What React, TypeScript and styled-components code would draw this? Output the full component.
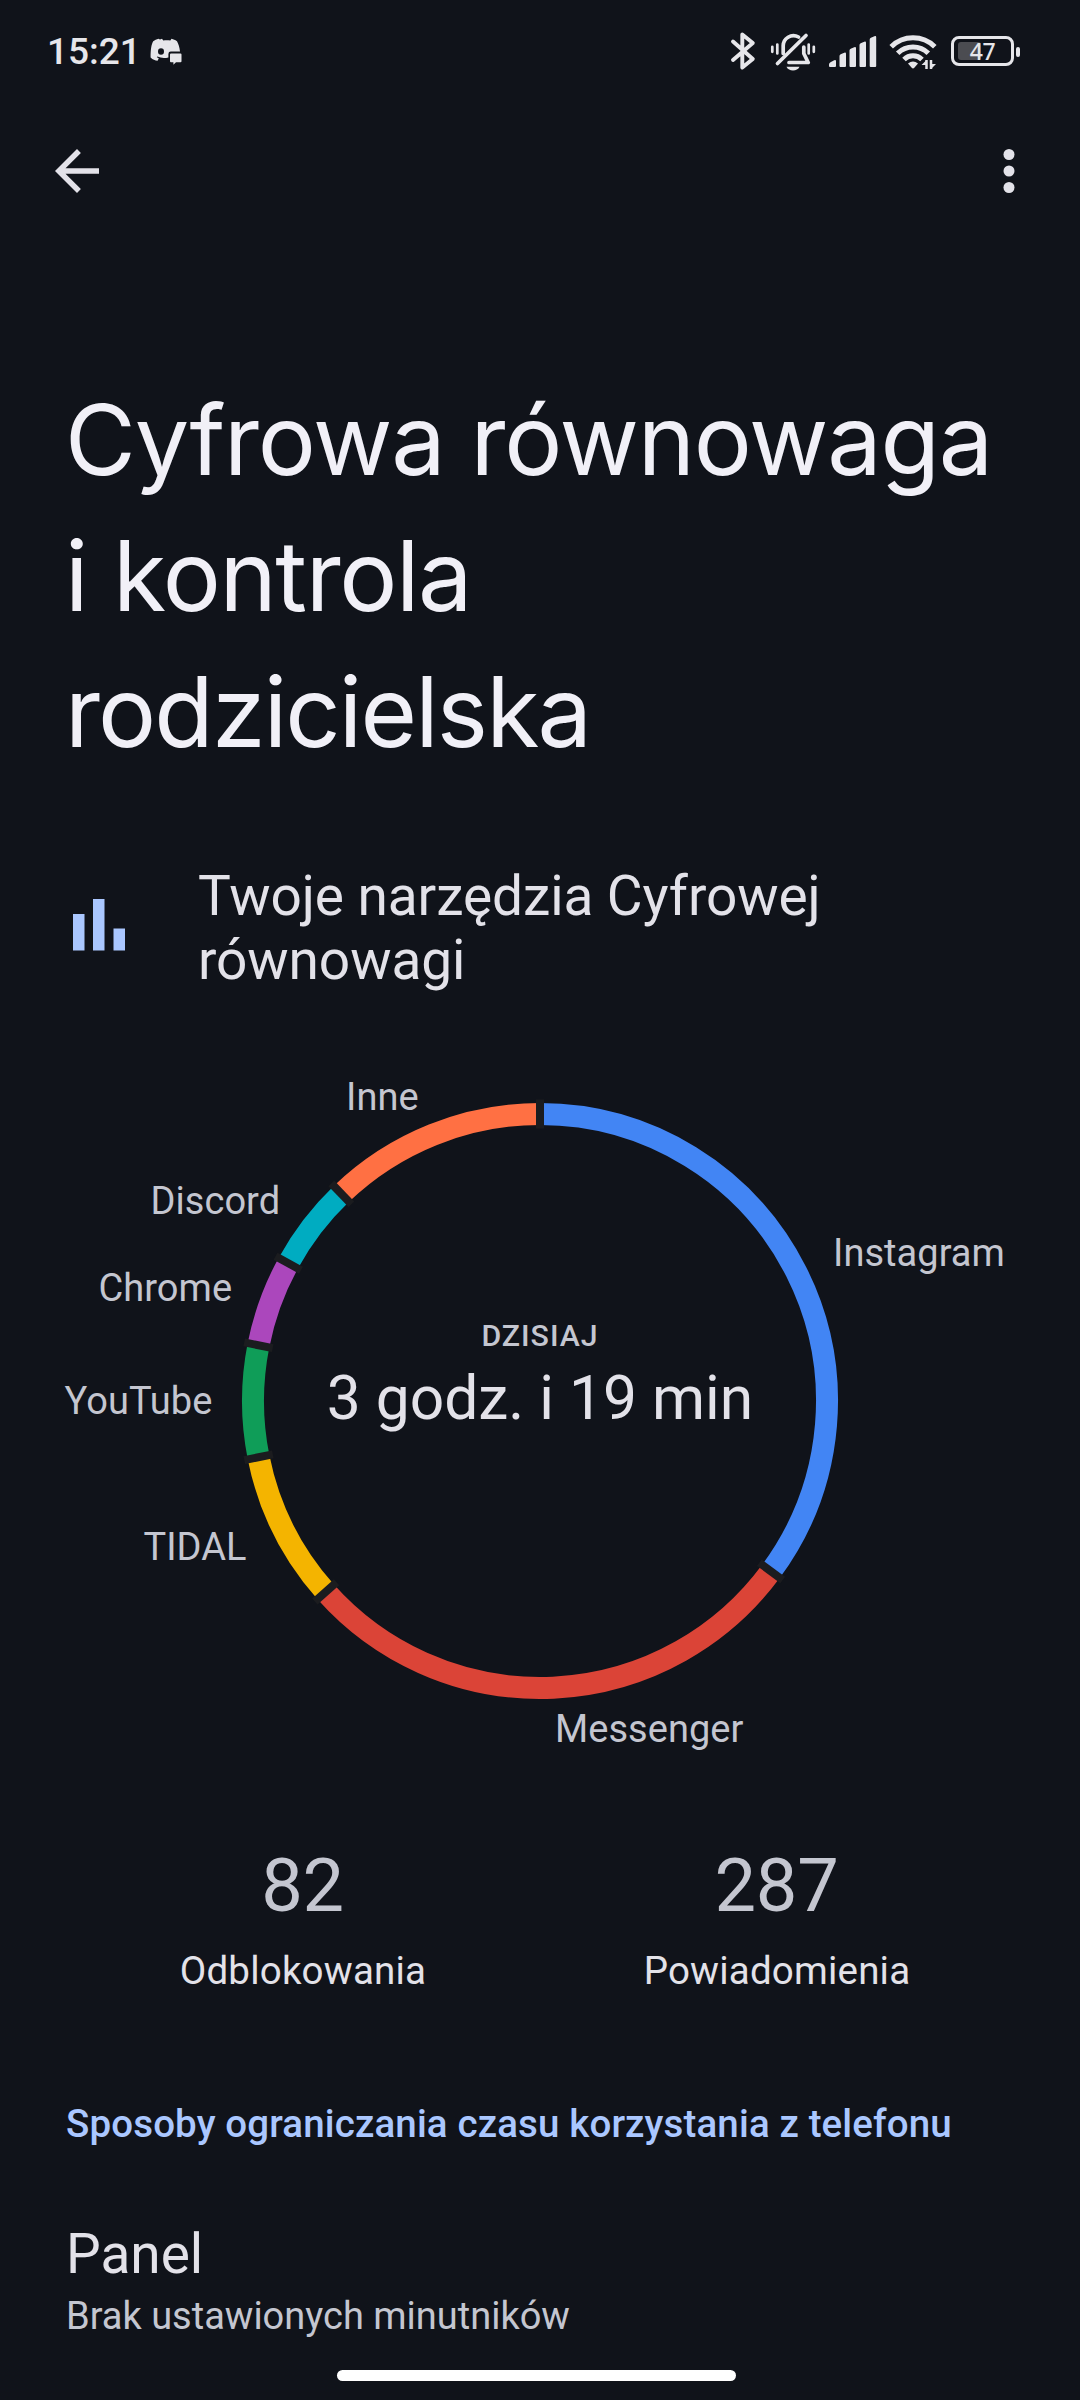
import React from "react";
import styled, { createGlobalStyle } from "styled-components";

const Global = createGlobalStyle`
  *, *::before, *::after { box-sizing: border-box; }
  html, body { margin: 0; padding: 0; background: #10131a; }
  svg { display: block; flex: none; }
`;

const Screen = styled.main`
  width: 1080px;
  height: 2400px;
  overflow: hidden;
  display: flex;
  flex-direction: column;
  background: #10131a;
  color: #e3e2e9;
  font-family: Roboto, sans-serif;
  font-size: 38.5px;
  line-height: 45px;
`;

const StatusBar = styled.header`
  height: 104px;
  flex: none;
  display: flex;
  justify-content: space-between;
  padding: 0 60px 0 47px;
  color: #e6e6ea;
`;

const StatusGroup = styled.div`
  display: flex;
  align-items: center;
`;

const Clock = styled.time`
  font-size: 37px;
  font-weight: 500;
  line-height: 44px;
  width: 103px;
`;

const AppBar = styled.nav`
  height: 134px;
  flex: none;
  display: flex;
  justify-content: space-between;
  align-items: center;
  padding: 0 38px 0 44px;
`;

const IconButton = styled.button`
  width: 66px;
  height: 66px;
  padding: 0;
  border: 0;
  background: none;
  color: #e3e2e9;
`;

const Title = styled.h1`
  margin: 134px 0 0 65px;
  height: 408px;
  flex: none;
  font-family: Inter, sans-serif;
  font-weight: 400;
  font-size: 97px;
  line-height: 136px;
  color: #f1f0f7;
`;

const TitleLine = styled.span<{ $spacing: number }>`
  display: block;
  white-space: nowrap;
  letter-spacing: ${(p) => p.$spacing}px;
`;

const ToolsRow = styled.section`
  margin-top: 84px;
  height: 128px;
  flex: none;
  display: flex;
  align-items: center;
  gap: 66px;
  padding-left: 66px;
`;

const ToolsTitle = styled.h2`
  margin: 0;
  width: 700px;
  font-size: 55px;
  font-weight: 400;
  line-height: 64px;
  letter-spacing: -0.08px;
`;

const Chart = styled.section`
  position: relative;
  height: 756px;
  margin-top: 31px;
  flex: none;
  display: flex;
  justify-content: center;
`;

const ChartLabel = styled.span<{ $x: number; $y: number }>`
  position: absolute;
  left: ${(p) => p.$x}px;
  top: ${(p) => p.$y}px;
  font-size: 38px;
  letter-spacing: 0.05px;
  color: #c4c6d0;
  white-space: nowrap;
`;

const ChartCenter = styled.div`
  position: absolute;
  inset: 295px 0 auto;
  display: flex;
  flex-direction: column;
  align-items: center;
`;

const ChartCaption = styled.span`
  font-size: 30.25px;
  font-weight: 500;
  line-height: 36px;
  letter-spacing: 1px;
  color: #c4c6d0;
`;

const ChartTotal = styled.strong`
  font-size: 60.5px;
  font-weight: 400;
  line-height: 72px;
  margin-top: 9px;
`;

const Stats = styled.section`
  display: grid;
  grid-template-columns: 1fr 1fr;
  flex: none;
  height: 169px;
  margin: 63px 66px 0;
`;

const Stat = styled.div`
  display: flex;
  flex-direction: column;
  align-items: center;
`;

const StatValue = styled.span`
  font-size: 74px;
  line-height: 88px;
  letter-spacing: -0.3px;
  margin-right: 1px;
  color: #c4c6d0;
`;

const StatLabel = styled.span`
  margin-top: 18px;
  letter-spacing: 0.2px;
`;

const SectionHeading = styled.h3`
  margin: 90px 0 0 66px;
  flex: none;
  font-size: 38.5px;
  font-weight: 500;
  line-height: 45px;
  letter-spacing: 0.13px;
  color: #aac7ff;
  white-space: nowrap;
`;

const Preference = styled.section`
  display: flex;
  flex-direction: column;
  flex: none;
  gap: 8px;
  margin: 76px 0 0 66px;
`;

const PreferenceTitle = styled.span`
  font-size: 55px;
  line-height: 64px;
`;

const PreferenceSummary = styled.span`
  font-size: 38px;
  color: #c4c6d0;
`;

const HomeHandle = styled.div`
  width: 399px;
  height: 11px;
  border-radius: 6px;
  background: #fff;
  margin: auto 0 19px 337px;
  flex: none;
`;

const COLORS = {
  instagram: "#4285f4",
  messenger: "#db4437",
  tidal: "#f4b400",
  youtube: "#0f9d58",
  chrome: "#ab47bc",
  discord: "#00acc1",
  other: "#ff7043",
};

const SEGMENTS = [
  { name: "Instagram", from: 0, color: COLORS.instagram, x: 833, y: 208 },
  { name: "Messenger", from: 126.4, color: COLORS.messenger, x: 555, y: 684 },
  { name: "TIDAL", from: 228.3, color: COLORS.tidal, x: 143.5, y: 502 },
  { name: "YouTube", from: 258.7, color: COLORS.youtube, x: 64.5, y: 356 },
  { name: "Chrome", from: 281.2, color: COLORS.chrome, x: 98.5, y: 243 },
  { name: "Discord", from: 298.7, color: COLORS.discord, x: 150.5, y: 156 },
  { name: "Inne", from: 316.2, color: COLORS.other, x: 346, y: 52 },
];

const point = (angle: number, r: number) => {
  const a = (angle * Math.PI) / 180;
  return `${(302 + r * Math.sin(a)).toFixed(2)} ${(302 - r * Math.cos(a)).toFixed(2)}`;
};

const RingSvg = styled.svg`
  margin-top: 75.5px;
`;

function Ring() {
  return (
    <RingSvg width="604" height="604" viewBox="0 0 604 604" fill="none">
      {SEGMENTS.map((s, i) => {
        const to = i + 1 < SEGMENTS.length ? SEGMENTS[i + 1].from : 360;
        const large = to - s.from > 180 ? 1 : 0;
        return (
          <path
            key={s.name}
            d={`M${point(s.from, 287)}A287 287 0 ${large} 1 ${point(to, 287)}`}
            stroke={s.color}
            strokeWidth="22"
          />
        );
      })}
      {SEGMENTS.map((s) => (
        <path key={s.name} d={`M${point(s.from, 272.5)}L${point(s.from, 301.5)}`} stroke="#1b1c1f" strokeWidth="8" />
      ))}
    </RingSvg>
  );
}

const DiscordIcon = () => (
  <svg width="34" height="28" viewBox="0 0 34 28" fill="currentColor">
    <path
      fillRule="evenodd"
      d="M10 1.500 8.500.800C6.500 1.200 4.700 2 3.200 3.200 1.400 6.500.600 11 .600 19.500c2.200 2.200 4.500 3 7 3.200l1.200-2.400-2-1 .6-.7c3.500 1.500 7 1.800 11 .8V16q0-2.400 2.400-2.400H30C29.500 9 28.500 6 27 3.200 25 2 23.500 1.300 21.500.800l-1.200 1.700c-2.300-.4-4.700-.4-7 0L12 .800zM11 10.300a3 3.200 0 1 1 0 6.400A3 3.200 0 0 1 11 10.300z"
    />
    <path d="M21 15.500h9.500q1 0 1 1v6.700q0 1-1 1H26l-2.600 2.600v-2.600H21q-1 0-1-1v-6.700q0-1 1-1z" />
  </svg>
);

const BluetoothIcon = () => (
  <svg width="26" height="40" viewBox="0 0 26 40" fill="none" stroke="currentColor" strokeWidth="3.900" strokeLinejoin="round" strokeLinecap="round">
    <path d="M3 10.500 22.800 28 12.300 36.500V3.500l10.500 8.500L3 29" />
  </svg>
);

const MutedBellIcon = () => (
  <svg width="46" height="40" viewBox="0 0 46 40" fill="none" stroke="currentColor" strokeWidth="3.700" strokeLinecap="round" strokeLinejoin="round">
    <path d="M13.200 21.500V14.500A10.300 10.300 0 0 1 28.500 5M33.800 15v6.500l4.400 9H19" />
    <path d="M7.500 31.500 36 3.500" />
    <path d="M2.300 14.800v5M7.300 12.500v9M38.700 12.500v9M43.800 14.800v5" strokeWidth="2.700" />
    <path d="M16.500 34.700h13c-2 5-11 5-13 0z" fill="currentColor" stroke="none" />
  </svg>
);

const SignalIcon = () => (
  <svg width="48" height="32" viewBox="0 0 48 32" fill="currentColor">
    <path d="M0 30v-1.500q0-1.500 1.500-2.300l3.700-2q1.800-.8 1.800 1V30q0 1-1 1H1q-1 0-1-1zM10.500 20q0-1.200 1.200-1.800l3.500-1.500q1.800-.7 1.800 1V30q0 1-1 1h-4.500q-1 0-1-1zM20.500 14.500q0-1.200 1.200-1.800l3.500-1.500q1.800-.7 1.800 1V30q0 1-1 1h-4.500q-1 0-1-1zM30.500 9q0-1.200 1.200-1.800l3.500-1.500q1.800-.7 1.800 1V30q0 1-1 1h-4.500q-1 0-1-1zM40.700 3.500q0-1.200 1.200-1.800l3.500-1.500q1.800-.7 1.800 1V30q0 1-1 1h-4.500q-1 0-1-1z" />
  </svg>
);

const WifiIcon = () => (
  <svg width="48" height="36" viewBox="0 0 48 36" fill="none" stroke="currentColor" strokeWidth="5">
    <path d="M2.200 12.800a31 31 0 0 1 43.600 0M8.700 19.300a21.800 21.800 0 0 1 30.600 0M15 25.500a12.800 12.800 0 0 1 18 0" />
    <path d="M19 29.500q5-4 10 0l-3.700 4.300q-1.300 1.200-2.600 0z" fill="currentColor" stroke="none" />
    <path d="M37.500 26v9M42 26v9" strokeWidth="2.500" />
    <path d="M32.500 31 37 26.500V31zM47 30 42.500 34.500V30z" fill="currentColor" stroke="none" />
  </svg>
);

const Battery = styled.div`
  position: relative;
  width: 63px;
  height: 30px;
  border: 3px solid currentColor;
  border-radius: 8px;
  display: flex;
  align-items: center;
  justify-content: center;
`;

const BatteryFill = styled.span`
  position: absolute;
  left: 4px;
  top: 3px;
  width: 23px;
  height: 18px;
  border-radius: 3px;
  background: #4b4c51;
`;

const BatteryLevel = styled.span`
  position: relative;
  font-family: "Noto Sans", sans-serif;
  font-size: 23px;
  font-weight: 500;
  line-height: 24px;
  letter-spacing: -0.5px;
`;

const BatteryCap = styled.span`
  width: 4px;
  height: 10px;
  margin: 0 0 1px 2px;
  border-radius: 2px;
  background: currentColor;
`;

const Slot = styled.span<{ $gap?: number; $raise?: number }>`
  display: flex;
  margin-left: ${(p) => p.$gap ?? 0}px;
  padding-bottom: ${(p) => p.$raise ?? 0}px;
`;

export default function App() {
  return (
    <>
      <Global />
      <Screen>
        <StatusBar>
          <StatusGroup>
            <Clock>15:21</Clock>
            <DiscordIcon />
          </StatusGroup>
          <StatusGroup>
            <Slot $raise={2}><BluetoothIcon /></Slot>
            <Slot $gap={14}><MutedBellIcon /></Slot>
            <Slot $gap={13}><SignalIcon /></Slot>
            <Slot $gap={12}><WifiIcon /></Slot>
            <Slot $gap={14} $raise={2}>
              <Battery>
                <BatteryFill />
                <BatteryLevel>47</BatteryLevel>
              </Battery>
            </Slot>
            <BatteryCap />
          </StatusGroup>
        </StatusBar>

        <AppBar>
          <IconButton aria-label="Wstecz">
            <svg width="66" height="66" viewBox="0 0 24 24" fill="currentColor">
              <path d="M20 11H7.830l5.590-5.590L12 4l-8 8 8 8 1.410-1.410L7.830 13H20z" />
            </svg>
          </IconButton>
          <IconButton aria-label="Więcej">
            <svg width="66" height="66" viewBox="0 0 24 24" fill="currentColor">
              <circle cx="12" cy="6" r="2" />
              <circle cx="12" cy="12" r="2" />
              <circle cx="12" cy="18" r="2" />
            </svg>
          </IconButton>
        </AppBar>

        <Title>
          <TitleLine $spacing={-1.2}>Cyfrowa równowaga</TitleLine>
          <TitleLine $spacing={-1.4}>i kontrola</TitleLine>
          <TitleLine $spacing={-1.85}>rodzicielska</TitleLine>
        </Title>

        <ToolsRow>
          <svg width="66" height="66" viewBox="0 0 66 66" fill="#aac7ff">
            <path d="M7 19h11.500V55.500H7zM27 4h11.500V55.500H27zM47.500 33.500H59v22H47.500z" />
          </svg>
          <ToolsTitle>Twoje narzędzia Cyfrowej równowagi</ToolsTitle>
        </ToolsRow>

        <Chart>
          <Ring />
          {SEGMENTS.map((s) => (
            <ChartLabel key={s.name} $x={s.x} $y={s.y}>{s.name}</ChartLabel>
          ))}
          <ChartCenter>
            <ChartCaption>DZISIAJ</ChartCaption>
            <ChartTotal>3 godz. i 19 min</ChartTotal>
          </ChartCenter>
        </Chart>

        <Stats>
          <Stat>
            <StatValue>82</StatValue>
            <StatLabel>Odblokowania</StatLabel>
          </Stat>
          <Stat>
            <StatValue>287</StatValue>
            <StatLabel>Powiadomienia</StatLabel>
          </Stat>
        </Stats>

        <SectionHeading>Sposoby ograniczania czasu korzystania z telefonu</SectionHeading>

        <Preference>
          <PreferenceTitle>Panel</PreferenceTitle>
          <PreferenceSummary>Brak ustawionych minutników</PreferenceSummary>
        </Preference>

        <HomeHandle />
      </Screen>
    </>
  );
}
